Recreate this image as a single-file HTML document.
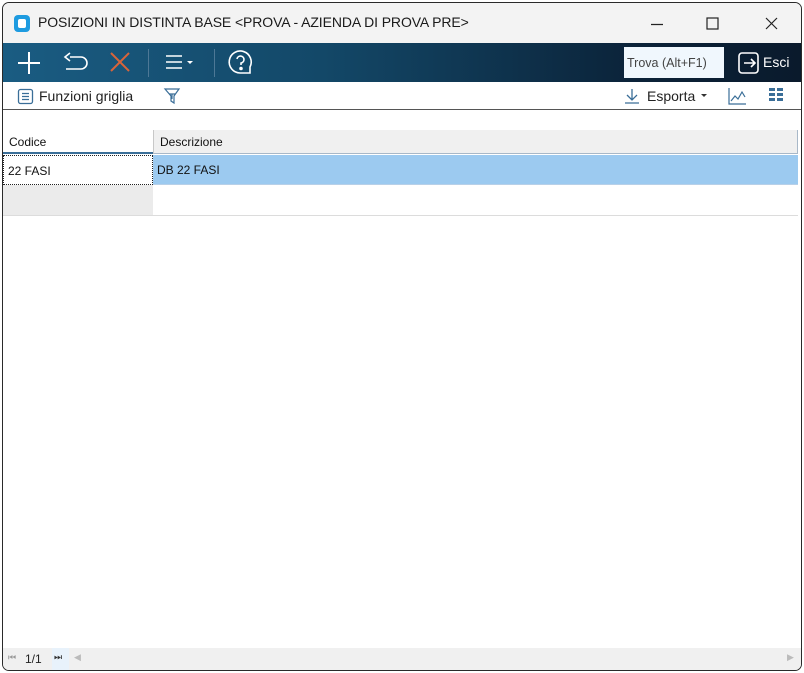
<!DOCTYPE html>
<html><head><meta charset="utf-8"><style>
*{box-sizing:border-box;margin:0;padding:0}
body{width:804px;height:673px;background:#fff;font-family:"Liberation Sans","DejaVu Sans",sans-serif;position:relative;overflow:hidden}
.win{position:absolute;left:2px;top:2px;width:800px;height:669px;border:1px solid #2a2a2a;border-radius:7px;overflow:hidden;background:#fff}
.title{position:absolute;left:0;top:0;width:100%;height:40px;background:#f3f3f3}
.title .t{position:absolute;left:35px;top:11px;font-size:14px;letter-spacing:-0.1px;color:#1a1a1a}
.logo{position:absolute;left:11px;top:12px;width:16px;height:17px;border-radius:4px;background:#1e9be0}
.logo:after{content:"";position:absolute;left:4px;top:4px;width:8px;height:9px;border-radius:2px;background:#fff}
.tb{position:absolute;left:0;top:40px;width:100%;height:39px;background:linear-gradient(90deg,#1a5c82 0%,#134868 40%,#0b2238 80%,#0a1a2c 100%)}
.sep{position:absolute;top:6px;width:1px;height:28px;background:#4d7896}
.trova{position:absolute;left:621px;top:4px;width:100px;height:31px;background:#f0f7fd;font-size:12.5px;color:#444;padding:9px 0 0 3px}
.esci{position:absolute;left:760px;top:11px;color:#fff;font-size:14px}
.tb2{position:absolute;left:0;top:79px;width:100%;height:28px;border-bottom:1px solid #555;background:#fff}
.tb2 span{position:absolute;top:6px;font-size:14px;color:#222}
.hdr{position:absolute;top:127px;height:24px;background:#f0f0f0;border-bottom:1px solid #a8b8c8;font-size:12px;color:#111;padding:5px 0 0 6px}
.cell{position:absolute;font-size:12px;color:#111;padding:8px 0 0 4px}
.pager{position:absolute;left:0;top:645px;width:100%;height:22px;background:#f0f0f0;font-size:12px}
</style></head><body>
<div class="win">
 <div class="title"><div class="logo"></div><div class="t">POSIZIONI IN DISTINTA BASE &lt;PROVA - AZIENDA DI PROVA PRE&gt;</div>
  <svg style="position:absolute;left:640px;top:10px" width="150" height="22" viewBox="0 0 150 22" fill="none" stroke="#222" stroke-width="1.2">
   <path d="M8 11.5h12"/><rect x="64" y="5" width="11" height="11"/><path d="M123 5l11 11M134 5l-11 11"/></svg>
 </div>
 <div class="tb">
  <svg style="position:absolute;left:0;top:0" width="260" height="39" viewBox="0 0 260 39" fill="none" stroke-width="2">
   <path d="M26 9v22M15 20h22" stroke="#fff"/>
   <path d="M67 14h11a6 6 0 0 1 0 12h-15M67 10l-5 4 5 4" stroke="#fff" stroke-width="1.6"/>
   <path d="M108 10l18 18M126 10l-18 18" stroke="#d9643a"/>
   <path d="M163 13h16M163 19h16M163 25h16" stroke="#fff" stroke-width="1.6"/>
   <path d="M184 18l3 3 3-3z" fill="#fff" stroke="none"/>
   <path d="M237 30a11 11 0 1 1 10-6l0 6z" stroke="#fff" stroke-width="1.6"/>
   <path d="M234 16a3.5 3.5 0 1 1 4 4v2" stroke="#fff" stroke-width="1.6"/><circle cx="238" cy="25.5" r="0.8" fill="#fff" stroke="#fff"/>
  </svg>
  <div class="sep" style="left:145px"></div><div class="sep" style="left:211px"></div>
  <div class="trova">Trova (Alt+F1)</div>
  <svg style="position:absolute;left:734px;top:8px" width="24" height="24" viewBox="0 0 24 24" fill="none" stroke="#fff" stroke-width="1.6">
   <rect x="2" y="2" width="19" height="20" rx="3"/><path d="M7 12h11M14 8l4 4-4 4"/></svg>
  <div class="esci">Esci</div>
 </div>
 <div class="tb2">
  <svg style="position:absolute;left:14px;top:6px" width="17" height="17" viewBox="0 0 17 17" fill="none" stroke="#3a6e98" stroke-width="1.3"><rect x="1.5" y="1.5" width="14" height="14" rx="2"/><path d="M5 5.5h7M5 8.5h7M5 11.5h7"/></svg>
  <span style="left:36px">Funzioni griglia</span>
  <svg style="position:absolute;left:160px;top:5px" width="18" height="18" viewBox="0 0 18 18" fill="none" stroke="#3a6e98" stroke-width="1.2"><path d="M2 2h14l-5 7v7l-3-2V9z"/><path d="M6 7h6M9 7v5"/></svg>
  <svg style="position:absolute;left:620px;top:5px" width="18" height="18" viewBox="0 0 18 18" fill="none" stroke="#3a6e98" stroke-width="1.3"><path d="M9 2v11M4 8l5 5 5-5M2 16h14"/></svg>
  <span style="left:644px">Esporta</span>
  <svg style="position:absolute;left:698px;top:12px" width="6" height="4"><path d="M0 0h6l-3 3z" fill="#333"/></svg>
  <svg style="position:absolute;left:724px;top:5px" width="20" height="18" viewBox="0 0 20 18" fill="none" stroke="#3a6e98" stroke-width="1.2"><path d="M2 1v16h17"/><path d="M4 14l4-5 3 3 4-7 3 5"/></svg>
  <svg style="position:absolute;left:766px;top:6px" width="14" height="14" viewBox="0 0 14 14" fill="#3a6e98"><rect x="0" y="0" width="6" height="3"/><rect x="8" y="0" width="6" height="3"/><rect x="0" y="5" width="6" height="3"/><rect x="8" y="5" width="6" height="3"/><rect x="0" y="10" width="6" height="3"/><rect x="8" y="10" width="6" height="3"/></svg>
 </div>
 <div class="hdr" style="left:0;width:150px;background:#fff;border-bottom:2px solid #3a6e98">Codice</div>
 <div class="hdr" style="left:150px;width:645px;border-left:1px solid #c8c8c8;border-right:1px solid #a8b8c8">Descrizione</div>
 <div class="cell" style="left:0;top:152px;width:150px;height:30px;border:1px dotted #222">22 FASI</div>
 <div class="cell" style="left:150px;top:152px;width:645px;height:30px;background:#9ccaf0;border-bottom:1px solid #b8d0e8">DB 22 FASI</div>
 <div style="position:absolute;left:0;top:182px;width:150px;height:30px;background:#ebebeb"></div>
 <div style="position:absolute;left:0;top:212px;width:795px;height:1px;background:#dcdcdc"></div>
 <div class="pager">
  <span style="position:absolute;left:5px;top:4px;font-size:9px;color:#999">⏮</span>
  <span style="position:absolute;left:22px;top:4px;color:#222">1/1</span>
  <div style="position:absolute;left:49px;top:0;width:17px;height:22px;background:#e8f2fb"></div>
  <span style="position:absolute;left:51px;top:4px;font-size:9px;color:#333">⏭</span>
  <span style="position:absolute;left:71px;top:4px;font-size:9px;color:#bbb">◀</span>
  <span style="position:absolute;left:784px;top:4px;font-size:9px;color:#bbb">▶</span>
 </div>
</div>
</body></html>
